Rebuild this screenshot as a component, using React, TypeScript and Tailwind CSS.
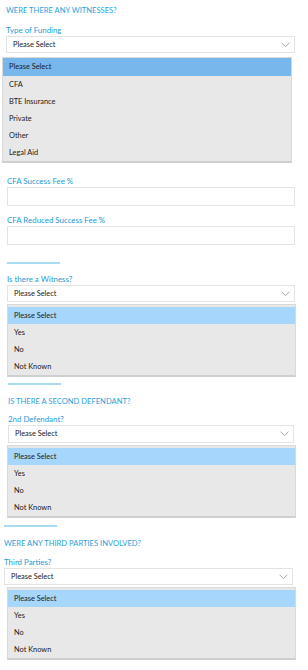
import React from 'react';

const font = { fontFamily: 'Lato, "Open Sans", sans-serif' };

function Chevron() {
  return (
    <svg width="9" height="6" viewBox="0 0 9 6" fill="none">
      <path d="M0.6 0.8 L4.5 4.6 L8.4 0.8" stroke="#9a9a9a" strokeWidth="0.9" />
    </svg>
  );
}

function SelectBox({ className }: { className: string }) {
  return (
    <div
      className={`flex items-center justify-between border border-[#e3e3e3] bg-white pl-[6px] pr-[4px] text-[7.4px] text-[#1a1a1a] ${className}`}
    >
      <span>Please Select</span>
      <Chevron />
    </div>
  );
}

function ListBox({
  items,
  className,
  highlight,
  firstH,
}: {
  items: string[];
  className: string;
  highlight: string;
  firstH: string;
}) {
  return (
    <div className={`border border-[#d9d9d9] border-b-2 border-b-[#cfcfcf] bg-[#e8e8e8] ${className}`}>
      {items.map((item, i) => (
        <div
          key={item}
          className={`flex items-center pl-[6px] text-[7.4px] text-[#1a1a1a] ${
            i === 0 ? `${highlight} ${firstH}` : 'h-[17px]'
          }`}
        >
          {item}
        </div>
      ))}
    </div>
  );
}

const yesNo = ['Please Select', 'Yes', 'No', 'Not Known'];

export default function App() {
  return (
    <div className="w-[308px] h-[670px] overflow-hidden bg-white" style={font}>
      {/* Funding */}
      <div className="ml-[6px] mt-[4px] h-[12px] leading-[12px] text-[7.6px] text-[#2aa2dc]">
        WERE THERE ANY WITNESSES?
      </div>
      <div className="ml-[6px] mt-[9px] h-[11px] leading-[11px] text-[7.9px] text-[#1d9bd8]">Type of Funding</div>
      <SelectBox className="ml-[6px] w-[289px] h-[17px]" />
      <ListBox
        items={['Please Select', 'CFA', 'BTE Insurance', 'Private', 'Other', 'Legal Aid']}
        className="ml-[2px] mt-[4px] w-[290px]"
        highlight="bg-[#78b7ec]"
        firstH="h-[18px]"
      />
      <div className="ml-[7px] mt-[13px] h-[11px] leading-[11px] text-[7.9px] text-[#1d9bd8]">CFA Success Fee %</div>
      <div className="ml-[7px] w-[288px] h-[19px] border border-[#e3e3e3] bg-white" />
      <div className="ml-[7px] mt-[9px] h-[11px] leading-[11px] text-[7.9px] text-[#1d9bd8]">CFA Reduced Success Fee %</div>
      <div className="ml-[7px] w-[288px] h-[19px] border border-[#e3e3e3] bg-white" />

      {/* Witness */}
      <div className="ml-[7px] mt-[17px] w-[53px] h-[2px] bg-[#a8dcf2]" />
      <div className="ml-[7px] mt-[10px] h-[11px] leading-[11px] text-[7.9px] text-[#1d9bd8]">Is there a Witness?</div>
      <SelectBox className="ml-[7px] w-[288px] h-[17px]" />
      <ListBox items={yesNo} className="ml-[7px] mt-[2px] w-[289px] pt-[2px]" highlight="bg-[#a6d6fb]" firstH="h-[17px]" />

      {/* Second defendant */}
      <div className="ml-[8px] mt-[6px] w-[53px] h-[2px] bg-[#a8dcf2]" />
      <div className="ml-[8px] mt-[10px] h-[12px] leading-[12px] text-[7.6px] text-[#2aa2dc]">
        IS THERE A SECOND DEFENDANT?
      </div>
      <div className="ml-[8px] mt-[7px] h-[11px] leading-[11px] text-[7.9px] text-[#1d9bd8]">2nd Defendant?</div>
      <SelectBox className="ml-[8px] w-[286px] h-[18px]" />
      <ListBox items={yesNo} className="ml-[7px] mt-[2px] w-[289px] pt-[2px]" highlight="bg-[#a6d6fb]" firstH="h-[17px]" />

      {/* Third parties */}
      <div className="ml-[4px] mt-[7px] w-[53px] h-[2px] bg-[#a8dcf2]" />
      <div className="ml-[4px] mt-[10px] h-[12px] leading-[12px] text-[7.6px] text-[#2aa2dc]">
        WERE ANY THIRD PARTIES INVOLVED?
      </div>
      <div className="ml-[4px] mt-[8px] h-[11px] leading-[11px] text-[7.9px] text-[#1d9bd8]">Third Parties?</div>
      <SelectBox className="ml-[4px] w-[289px] h-[17px]" />
      <ListBox items={yesNo} className="ml-[7px] mt-[2px] w-[289px] pt-[2px]" highlight="bg-[#a6d6fb]" firstH="h-[17px]" />
    </div>
  );
}
